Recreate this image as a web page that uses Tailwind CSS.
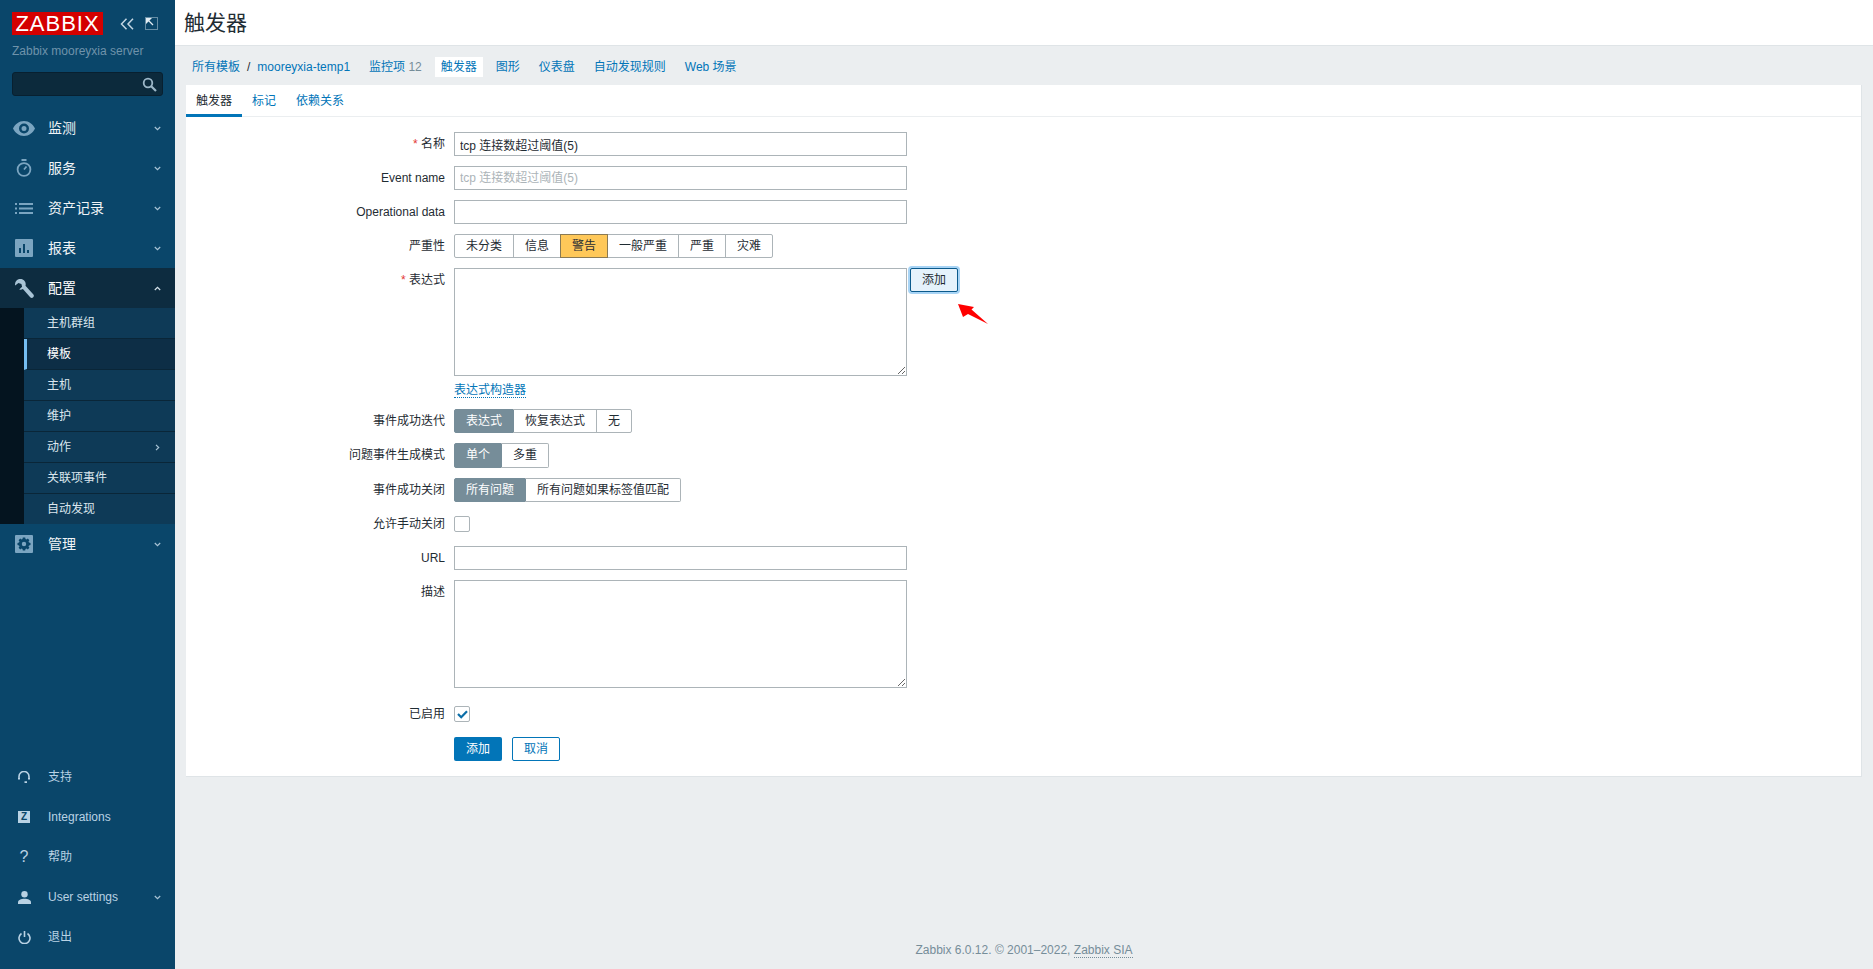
<!DOCTYPE html>
<html lang="zh">
<head>
    <meta charset="UTF-8">
    <title>触发器</title>
    <script src="https://cdn.jsdelivr.net/npm/@tailwindcss/browser@4"></script>
</head>
<body class="h-screen overflow-hidden flex bg-[#ebeef0] text-[12px] text-[#1f2c33] [font-family:'Liberation_Sans','Noto_Sans_CJK_SC',sans-serif]">

    <!-- sidebar -->
    <aside class="w-[175px] shrink-0 h-full flex flex-col bg-[#0a466a]">
        <div class="h-[268px] shrink-0 flex flex-col">
            <div class="flex items-center pl-[12px] pt-[12px]">
                <div class="w-[91px] h-[23px] bg-[#d40000] text-white text-[22px] leading-[23px] tracking-[1px] text-center">ZABBIX</div>
                <svg class="w-[14px] h-[12px] ml-[17px]" viewBox="0 0 14 12" fill="none" stroke="#c3d6e3" stroke-width="1.500"><path d="M6.500 .8 1.500 6l5 5.200M13 .8 8 6l5 5.200"/></svg>
                <svg class="w-[13px] h-[13px] ml-[11px]" viewBox="0 0 13 13" fill="none" stroke="#c3d6e3" stroke-width="1" stroke-dasharray="1 1"><rect x=".5" y=".5" width="12" height="12"/><path d="M1 1h6L1 7z" fill="#e3edf3" stroke="none"/><path d="m3 3 5 5" stroke-dasharray="none" stroke="#e3edf3" stroke-width="1.200"/></svg>
            </div>
            <div class="pl-[12px] mt-[9px] h-[14px] leading-[14px] text-[#6f93ab]">Zabbix mooreyxia server</div>
            <div class="mx-[12px] mt-[14px] h-[24px] rounded-[3px] bg-[#0c2a3c] border border-[#082030] flex items-center justify-end pr-[5px]">
                <svg class="w-[15px] h-[15px]" viewBox="0 0 15 15" fill="none" stroke="#9db8c9" stroke-width="1.800"><circle cx="6" cy="6" r="4.300"/><path d="m9.200 9.200 4.800 4.800" stroke-width="2.200"/></svg>
            </div>
            <nav class="mt-[12px] text-[14px] text-[#f0f4f7]">
                <div class="h-[40px] flex items-center pr-[14px]">
                    <span class="w-[48px] flex justify-center pr-[1px]">
                        <svg class="w-[22px] h-[15px]" viewBox="0 0 22 15"><path fill="#7ba5c1" fill-rule="evenodd" d="M11 0c5 0 9 3.400 11 7.500C20 11.600 16 15 11 15S2 11.600 0 7.500C2 3.400 6 0 11 0Zm0 2.500a5 5 0 1 0 0 10 5 5 0 0 0 0-10Zm0 2.500a2.500 2.500 0 1 1 0 5 2.500 2.500 0 0 1 0-5Z"/></svg>
                    </span>
                    <span class="flex-1">监测</span>
                    <svg class="w-[7px] h-[5px]" viewBox="0 0 7 5" fill="none" stroke="#a9c4d6" stroke-width="1.200"><path d="m.8 1 2.700 2.700L6.200 1"/></svg>
                </div>
                <div class="h-[40px] flex items-center pr-[14px]">
                    <span class="w-[48px] flex justify-center">
                        <svg class="w-[16px] h-[18px]" viewBox="0 0 16 18" fill="none" stroke="#7ba5c1" stroke-width="1.800"><circle cx="8" cy="10.500" r="6.400"/><path d="M8 10.500 10.500 7.500M5.500 1h5"/></svg>
                    </span>
                    <span class="flex-1">服务</span>
                    <svg class="w-[7px] h-[5px]" viewBox="0 0 7 5" fill="none" stroke="#a9c4d6" stroke-width="1.200"><path d="m.8 1 2.700 2.700L6.200 1"/></svg>
                </div>
                <div class="h-[40px] flex items-center pr-[14px]">
                    <span class="w-[48px] flex justify-center">
                        <svg class="w-[18px] h-[11px]" viewBox="0 0 18 11" fill="#7ba5c1"><path d="M0 0h2v2H0zM4 0h14v2H4zM0 4.500h2v2H0zM4 4.500h14v2H4zM0 9h2v2H0zM4 9h14v2H4z"/></svg>
                    </span>
                    <span class="flex-1">资产记录</span>
                    <svg class="w-[7px] h-[5px]" viewBox="0 0 7 5" fill="none" stroke="#a9c4d6" stroke-width="1.200"><path d="m.8 1 2.700 2.700L6.200 1"/></svg>
                </div>
                <div class="h-[40px] flex items-center pr-[14px]">
                    <span class="w-[48px] flex justify-center">
                        <svg class="w-[18px] h-[18px]" viewBox="0 0 18 18"><rect width="18" height="18" rx="1" fill="#7ba5c1"/><path fill="#0a466a" d="M4 9h2v5H4zM8 5h2v9H8zM12 11h2v3h-2z"/></svg>
                    </span>
                    <span class="flex-1">报表</span>
                    <svg class="w-[7px] h-[5px]" viewBox="0 0 7 5" fill="none" stroke="#a9c4d6" stroke-width="1.200"><path d="m.8 1 2.700 2.700L6.200 1"/></svg>
                </div>
            </nav>
        </div>

        <div class="h-[40px] shrink-0 flex items-center pr-[14px] bg-[#0d2c40] text-[14px] text-white">
            <span class="w-[48px] flex justify-center">
                <svg class="w-[19px] h-[19px]" viewBox="0 0 19 19"><path fill="#a9c4d6" d="M7.200.2a5.400 5.400 0 0 0-7 6.400L3.400 3.900l3 1 .7 2.800L4.200 10.500a5.400 5.400 0 0 0 3.700-.5l7.300 8.300c.9.900 2.200.9 3 0 .9-.9.9-2.100 0-3L10.500 6.700A5.400 5.400 0 0 0 7.200.2Z"/></svg>
            </span>
            <span class="flex-1">配置</span>
            <svg class="w-[7px] h-[5px]" viewBox="0 0 7 5" fill="none" stroke="#d5e2eb" stroke-width="1.200"><path d="m.8 4 2.700-2.700L6.200 4"/></svg>
        </div>

        <div class="h-[216px] shrink-0 flex flex-col pl-[24px] bg-[#04141f] text-[#dbe6ee]">
            <div class="flex-1 flex items-center pl-[23px] bg-[#0e3a57] border-b border-[#0a2638]">主机群组</div>
            <div class="flex-1 flex items-center pl-[20px] bg-[#0d2e46] border-b border-[#0a2638] border-l-[3px] border-l-[#75bdf0] text-white">模板</div>
            <div class="flex-1 flex items-center pl-[23px] bg-[#0e3a57] border-b border-[#0a2638]">主机</div>
            <div class="flex-1 flex items-center pl-[23px] bg-[#0e3a57] border-b border-[#0a2638]">维护</div>
            <div class="flex-1 flex items-center pl-[23px] pr-[15px] justify-between bg-[#0e3a57] border-b border-[#0a2638]">动作
                <svg class="w-[5px] h-[7px]" viewBox="0 0 5 7" fill="none" stroke="#a9c4d6" stroke-width="1.200"><path d="m1 .8 2.700 2.700L1 6.200"/></svg>
            </div>
            <div class="flex-1 flex items-center pl-[23px] bg-[#0e3a57] border-b border-[#0a2638]">关联项事件</div>
            <div class="flex-1 flex items-center pl-[23px] bg-[#0e3a57]">自动发现</div>
        </div>

        <div class="h-[40px] shrink-0 flex items-center pr-[14px] text-[14px] text-[#f0f4f7]">
            <span class="w-[48px] flex justify-center">
                <svg class="w-[18px] h-[18px]" viewBox="0 0 18 18" fill-rule="evenodd"><rect width="18" height="18" rx="1" fill="#7ba5c1"/><path fill="#0a466a" d="M7.800 3h2.400l.3 1.500 1 .4 1.300-.8 1.600 1.700-.9 1.200.5 1.100 1.500.3v2.200l-1.500.3-.5 1.100.9 1.200-1.600 1.700-1.300-.8-1 .4-.3 1.500H7.800l-.3-1.500-1-.4-1.300.8-1.600-1.700.9-1.200-.5-1.100-1.500-.3V8.400l1.500-.3.500-1.100-.9-1.200 1.600-1.700 1.300.8 1-.4zM9 7.300a2.200 2.200 0 1 0 0 4.400 2.200 2.200 0 0 0 0-4.400z" transform="translate(0 -.500)"/></svg>
            </span>
            <span class="flex-1">管理</span>
            <svg class="w-[7px] h-[5px]" viewBox="0 0 7 5" fill="none" stroke="#a9c4d6" stroke-width="1.200"><path d="m.8 1 2.700 2.700L6.200 1"/></svg>
        </div>

        <div class="mt-auto pb-[12px] text-[#b9d2e4]">
            <div class="h-[40px] flex items-center pr-[14px]">
                <span class="w-[48px] flex justify-center">
                    <svg class="w-[12px] h-[12px]" viewBox="0 0 12 12" fill="none" stroke="#b9d2e4" stroke-width="1.600"><path d="M1 8V5.500a5 5 0 0 1 10 0V8"/><path d="M1 7v1.500M11 7v1.500M9 11.200H6.500" stroke-width="2"/></svg>
                </span>
                <span>支持</span>
            </div>
            <div class="h-[40px] flex items-center pr-[14px]">
                <span class="w-[48px] flex justify-center">
                    <span class="w-[12px] h-[12px] bg-[#b9d2e4] text-[#0a466a] text-[10px] leading-[12px] font-bold text-center">Z</span>
                </span>
                <span>Integrations</span>
            </div>
            <div class="h-[40px] flex items-center pr-[14px]">
                <span class="w-[48px] text-center text-[16px]">?</span>
                <span>帮助</span>
            </div>
            <div class="h-[40px] flex items-center pr-[14px]">
                <span class="w-[48px] flex justify-center">
                    <svg class="w-[13px] h-[13px]" viewBox="0 0 13 13" fill="#b9d2e4"><circle cx="6.500" cy="3.300" r="3.200"/><path d="M0 13v-1.800C0 9.200 3 7.800 6.500 7.800s6.500 1.400 6.500 3.400V13z"/></svg>
                </span>
                <span class="flex-1">User settings</span>
                <svg class="w-[7px] h-[5px]" viewBox="0 0 7 5" fill="none" stroke="#a9c4d6" stroke-width="1.200"><path d="m.8 1 2.700 2.700L6.200 1"/></svg>
            </div>
            <div class="h-[40px] flex items-center pr-[14px]">
                <span class="w-[48px] flex justify-center">
                    <svg class="w-[13px] h-[13px]" viewBox="0 0 13 13" fill="none" stroke="#b9d2e4" stroke-width="1.600"><path d="M3.500 2.500a5.500 5.500 0 1 0 6 0M6.500 0v6"/></svg>
                </span>
                <span>退出</span>
            </div>
        </div>
    </aside>

    <!-- main -->
    <div class="flex-1 min-w-0 h-full flex flex-col">
        <header class="h-[46px] shrink-0 bg-white border-b border-[#dfe4e7] pl-[9px] flex items-center">
            <h1 class="text-[21px] leading-[24px] text-[#1f2c33]">触发器</h1>
        </header>

        <div class="h-[39px] shrink-0 flex items-center pt-[3px] pl-[17px] text-[#0275b8]">
            <span>所有模板</span>
            <span class="mx-[7px] text-[#1f2c33]">/</span>
            <span class="mr-[7px]">mooreyxia-temp1</span>
            <span class="px-[6px] h-[20px] leading-[20px] mr-[7px] ml-[6px]">监控项 <span class="text-[#768d99]">12</span></span>
            <span class="px-[6px] h-[20px] leading-[20px] mr-[7px] bg-white">触发器</span>
            <span class="px-[6px] h-[20px] leading-[20px] mr-[7px]">图形</span>
            <span class="px-[6px] h-[20px] leading-[20px] mr-[7px]">仪表盘</span>
            <span class="px-[6px] h-[20px] leading-[20px] mr-[7px]">自动发现规则</span>
            <span class="px-[6px] h-[20px] leading-[20px]">Web 场景</span>
        </div>

        <main class="mx-[11px] h-[692px] shrink-0 bg-white border-r border-b border-[#dfe4e7]">
            <div class="h-[32px] flex border-b border-[#ebeef0] text-[#0275b8]">
                <span class="h-[32px] px-[10px] leading-[32px] border-b-[3px] border-[#0275b8] text-[#1f2c33]">触发器</span>
                <span class="px-[10px] leading-[32px]">标记</span>
                <span class="px-[10px] leading-[32px]">依赖关系</span>
            </div>

            <form class="relative pt-[15px] flex flex-col gap-[10px]">
                <div class="flex">
                    <label class="w-[259px] text-right leading-[24px]"><span class="text-[#e33734]">*</span> 名称</label>
                    <input type="text" value="tcp 连接数超过阈值(5)" class="ml-[9px] w-[453px] h-[24px] px-[5px] border border-[#acb4b8] text-[12px]">
                </div>
                <div class="flex">
                    <label class="w-[259px] text-right leading-[24px]">Event name</label>
                    <input type="text" placeholder="tcp 连接数超过阈值(5)" class="ml-[9px] w-[453px] h-[24px] px-[5px] border border-[#acb4b8] text-[12px] placeholder:text-[#acb4b8]">
                </div>
                <div class="flex">
                    <label class="w-[259px] text-right leading-[24px]">Operational data</label>
                    <input type="text" class="ml-[9px] w-[453px] h-[24px] px-[5px] border border-[#acb4b8]">
                </div>
                <div class="flex">
                    <label class="w-[259px] text-right leading-[24px]">严重性</label>
                    <div class="ml-[9px] flex h-[24px] leading-[22px]">
                        <span class="px-[11px] border border-[#acb4b8] rounded-l-[2px]">未分类</span>
                        <span class="-ml-px px-[11px] border border-[#acb4b8]">信息</span>
                        <span class="-ml-px px-[11px] border border-[#8a7a54] bg-[#ffc859] relative">警告</span>
                        <span class="-ml-px px-[11px] border border-[#acb4b8]">一般严重</span>
                        <span class="-ml-px px-[11px] border border-[#acb4b8]">严重</span>
                        <span class="-ml-px px-[11px] border border-[#acb4b8] rounded-r-[2px]">灾难</span>
                    </div>
                </div>
                <div class="flex">
                    <label class="w-[259px] text-right leading-[24px]"><span class="text-[#e33734]">*</span> 表达式</label>
                    <div class="ml-[9px]">
                        <textarea class="block w-[453px] h-[108px] border border-[#acb4b8] resize-y"></textarea>
                        <div class="mt-[7px] h-[14px] leading-[14px]"><span class="text-[#0275b8] border-b border-dotted border-[#0275b8]">表达式构造器</span></div>
                    </div>
                    <button type="button" class="ml-[3px] w-[48px] h-[24px] self-start bg-[#e5f2fb] border border-[#0b5a8c] rounded-[2px] shadow-[0_0_0_2px_#a8d4f5] text-[12px]">添加</button>
                </div>
                <div class="flex mt-[2px]">
                    <label class="w-[259px] text-right leading-[24px]">事件成功迭代</label>
                    <div class="ml-[9px] flex h-[24px] leading-[22px]">
                        <span class="px-[11px] border border-[#768d99] bg-[#768d99] text-white rounded-l-[2px]">表达式</span>
                        <span class="-ml-px px-[11px] border border-[#acb4b8] border-l-0 pl-[12px]">恢复表达式</span>
                        <span class="-ml-px px-[11px] border border-[#acb4b8] rounded-r-[2px]">无</span>
                    </div>
                </div>
                <div class="flex">
                    <label class="w-[259px] text-right leading-[25px]">问题事件生成模式</label>
                    <div class="ml-[9px] flex h-[25px] leading-[23px]">
                        <span class="px-[11px] border border-[#768d99] bg-[#768d99] text-white rounded-l-[2px]">单个</span>
                        <span class="-ml-px px-[11px] border border-[#acb4b8] border-l-0 pl-[12px] rounded-r-[2px]">多重</span>
                    </div>
                </div>
                <div class="flex">
                    <label class="w-[259px] text-right leading-[24px]">事件成功关闭</label>
                    <div class="ml-[9px] flex h-[24px] leading-[22px]">
                        <span class="px-[11px] border border-[#768d99] bg-[#768d99] text-white rounded-l-[2px]">所有问题</span>
                        <span class="-ml-px px-[11px] border border-[#acb4b8] border-l-0 pl-[12px] rounded-r-[2px]">所有问题如果标签值匹配</span>
                    </div>
                </div>
                <div class="flex h-[24px] items-center">
                    <label class="w-[259px] text-right">允许手动关闭</label>
                    <span class="ml-[9px] w-[16px] h-[16px] border border-[#acb4b8] rounded-[2px]"></span>
                </div>
                <div class="flex">
                    <label class="w-[259px] text-right leading-[24px]">URL</label>
                    <input type="text" class="ml-[9px] w-[453px] h-[24px] px-[5px] border border-[#acb4b8]">
                </div>
                <div class="flex">
                    <label class="w-[259px] text-right leading-[24px]">描述</label>
                    <textarea class="ml-[9px] block w-[453px] h-[108px] border border-[#acb4b8] resize-y"></textarea>
                </div>
                <div class="flex h-[24px] mt-[4px] items-center">
                    <label class="w-[259px] text-right">已启用</label>
                    <span class="ml-[9px] w-[16px] h-[16px] border border-[#acb4b8] rounded-[2px] flex items-center justify-center">
                        <svg class="w-[11px] h-[9px]" viewBox="0 0 11 9" fill="none" stroke="#0b6ea8" stroke-width="2.200"><path d="m1 4 3.200 3.200L10 1.200"/></svg>
                    </span>
                </div>
                <div class="flex gap-[10px] pl-[268px] mt-[1px]">
                    <button type="button" class="w-[48px] h-[24px] bg-[#0275b8] rounded-[2px] text-white text-[12px]">添加</button>
                    <button type="button" class="w-[48px] h-[24px] border border-[#0275b8] rounded-[2px] text-[#0275b8] text-[12px]">取消</button>
                </div>

                <svg class="absolute left-[770px] top-[186px] w-[34px] h-[24px]" viewBox="0 0 34 24"><path fill="#f00" d="M2 1 18 4 15.500 6.500 32 21 12 11 7 14z"/></svg>
            </form>
        </main>

        <footer class="mt-auto pb-[12px] text-center text-[#768d99] leading-[14px]">
            Zabbix 6.0.12. © 2001–2022, <span class="border-b border-dotted border-[#768d99]">Zabbix SIA</span>
        </footer>
    </div>

</body>
</html>
